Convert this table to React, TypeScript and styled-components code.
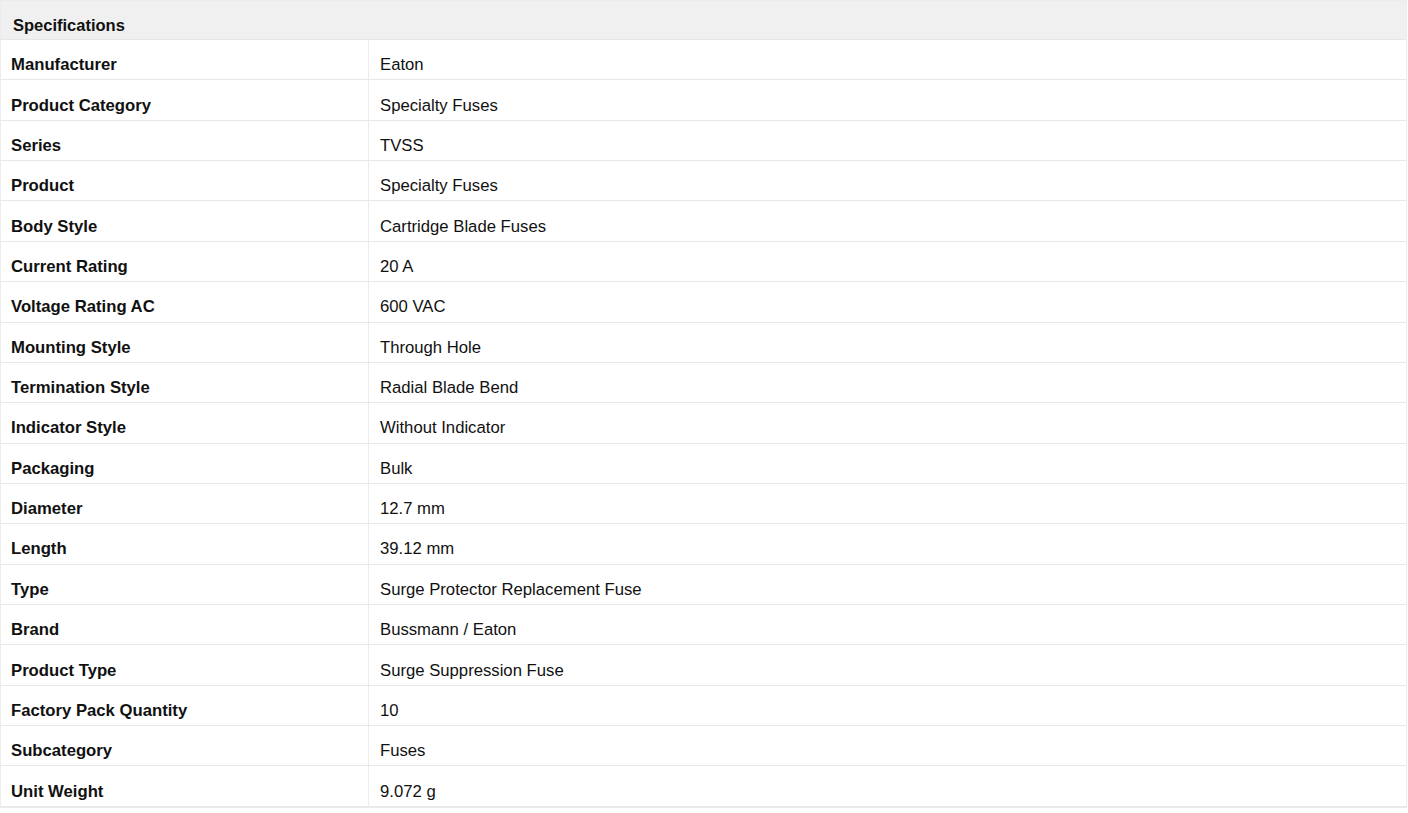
import styled, { createGlobalStyle } from 'styled-components';

const GlobalStyle = createGlobalStyle`
  html, body {
    margin: 0;
    padding: 0;
    background: #ffffff;
  }
  body {
    font-family: "Liberation Sans", Arial, sans-serif;
    color: #111;
  }
`;

const Table = styled.div`
  width: 1407px;
  display: flex;
  flex-direction: column;
  border: 1px solid #ececec;
  box-sizing: border-box;
`;

const Header = styled.div`
  height: 39px;
  box-sizing: border-box;
  background-color: #f0f0f0;
  border-bottom: 1px solid #e6e6e6;
  display: flex;
  align-items: center;
  padding: 10px 0 0 12px;
  font-size: 16.5px;
  font-weight: 700;
`;

const Row = styled.div`
  display: grid;
  grid-template-columns: 368px 1fr;
  height: 40.37px;
  box-sizing: border-box;
  border-bottom: 1.5px solid #e8e8e8;
`;

const Cell = styled.div<{ $label?: boolean }>`
  display: flex;
  align-items: center;
  box-sizing: border-box;
  padding: 11px 0 0 ${(p) => (p.$label ? '10px' : '11px')};
  font-size: 16.7px;
  font-weight: ${(p) => (p.$label ? 700 : 400)};
  color: #111;
  border-right: ${(p) => (p.$label ? '1.5px solid #ececec' : 'none')};
  white-space: nowrap;
`;

const specs: [string, string][] = [
  ['Manufacturer', 'Eaton'],
  ['Product Category', 'Specialty Fuses'],
  ['Series', 'TVSS'],
  ['Product', 'Specialty Fuses'],
  ['Body Style', 'Cartridge Blade Fuses'],
  ['Current Rating', '20 A'],
  ['Voltage Rating AC', '600 VAC'],
  ['Mounting Style', 'Through Hole'],
  ['Termination Style', 'Radial Blade Bend'],
  ['Indicator Style', 'Without Indicator'],
  ['Packaging', 'Bulk'],
  ['Diameter', '12.7 mm'],
  ['Length', '39.12 mm'],
  ['Type', 'Surge Protector Replacement Fuse'],
  ['Brand', 'Bussmann / Eaton'],
  ['Product Type', 'Surge Suppression Fuse'],
  ['Factory Pack Quantity', '10'],
  ['Subcategory', 'Fuses'],
  ['Unit Weight', '9.072 g'],
];

const App = () => {
  return (
    <>
      <GlobalStyle />
      <Table>
        <Header>Specifications</Header>
        {specs.map(([label, value]) => (
          <Row key={label}>
            <Cell $label>{label}</Cell>
            <Cell>{value}</Cell>
          </Row>
        ))}
      </Table>
    </>
  );
};

export default App;
